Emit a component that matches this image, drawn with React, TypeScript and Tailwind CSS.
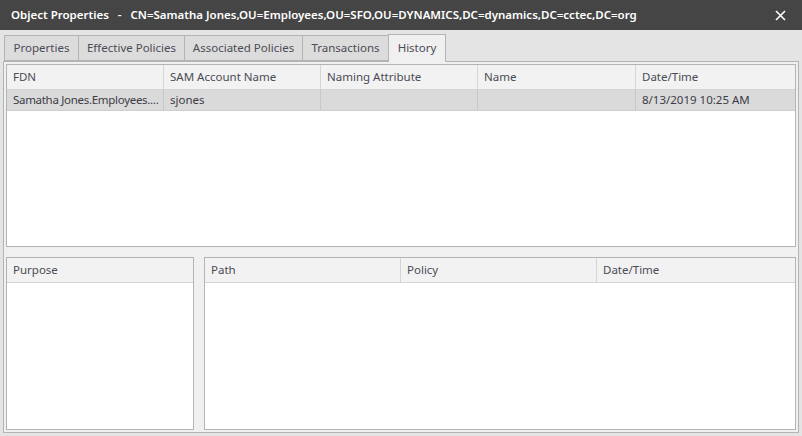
import React from "react"

const font = { fontFamily: '"Segoe UI", "Noto Sans", "Open Sans", sans-serif' }

const tabs = ["Properties", "Effective Policies", "Associated Policies", "Transactions", "History"]
const tabWidths = ["w-[75px]", "w-[107px]", "w-[119px]", "w-[87px]", "w-[58px]"]

function HeaderCell({ label, w, last }: { label: string; w: string; last?: boolean }) {
  return (
    <div className={`${w} h-full flex items-center px-[6px] text-[#4b4b55] ${last ? "" : "border-r border-[#d5d5d5]"}`}>
      {label}
    </div>
  )
}

export default function App() {
  return (
    <div className="w-[802px] h-[436px] flex flex-col bg-[#e4e4e4] text-[11.5px] overflow-hidden" style={font}>
      {/* title bar */}
      <div className="h-[30px] shrink-0 bg-[#454545] text-white flex items-center pl-[11px] pr-[14px] font-semibold">
        <span className="whitespace-pre flex-1">Object Properties   -   CN=Samatha Jones,OU=Employees,OU=SFO,OU=DYNAMICS,DC=dynamics,DC=cctec,DC=org</span>
        <svg width="11" height="11" viewBox="0 0 11 11" className="mr-[2px]">
          <path d="M1 1 L10 10 M10 1 L1 10" stroke="white" strokeWidth="1.6" />
        </svg>
      </div>

      {/* tabs */}
      <div className="flex items-end pl-[4px] h-[31px] shrink-0 relative z-10">
        {tabs.map((t, i) => {
          const active = t === "History"
          return (
            <div
              key={t}
              className={`${tabWidths[i]} flex items-center justify-center text-[#4b4b55] border border-[#b4b4b4] ${
                active
                  ? "h-[28px] bg-[#f0f0f0] border-b-0 -mb-px pb-[1px]"
                  : "h-[26px] bg-[#dcdcdc] -mr-px"
              }`}
            >
              {t}
            </div>
          )
        })}
      </div>

      {/* tab panel */}
      <div className="flex-1 mx-[3px] mb-[3px] border border-[#b4b4b4] bg-[#f0f0f0] p-[2px] flex flex-col gap-[10px]">
        {/* history grid */}
        <div className="h-[183px] shrink-0 border border-[#b4b4b4] bg-white flex flex-col">
          <div className="h-[25px] shrink-0 flex bg-[#f2f2f2] border-b border-[#d5d5d5]">
            <HeaderCell label="FDN" w="w-[157px]" />
            <HeaderCell label="SAM Account Name" w="w-[157px]" />
            <HeaderCell label="Naming Attribute" w="w-[157px]" />
            <HeaderCell label="Name" w="w-[158px]" />
            <HeaderCell label="Date/Time" w="flex-1" last />
          </div>
          <div className="h-[21px] shrink-0 flex bg-[#dadada] border-b border-[#cfcfcf] text-[#3c3c46]">
            <div className="w-[157px] flex items-center px-[6px] border-r border-[#c8c8c8] whitespace-nowrap tracking-[-0.3px]">Samatha Jones.Employees....</div>
            <div className="w-[157px] flex items-center px-[6px] border-r border-[#c8c8c8]">sjones</div>
            <div className="w-[157px] border-r border-[#c8c8c8]" />
            <div className="w-[158px] border-r border-[#c8c8c8]" />
            <div className="flex-1 flex items-center px-[6px]">8/13/2019 10:25 AM</div>
          </div>
        </div>

        {/* bottom grids */}
        <div className="flex-1 flex gap-[10px]">
          <div className="w-[188px] border border-[#b4b4b4] bg-white flex flex-col">
            <div className="h-[25px] shrink-0 flex bg-[#f2f2f2] border-b border-[#d5d5d5]">
              <HeaderCell label="Purpose" w="flex-1" last />
            </div>
          </div>
          <div className="flex-1 border border-[#b4b4b4] bg-white flex flex-col">
            <div className="h-[25px] shrink-0 flex bg-[#f2f2f2] border-b border-[#d5d5d5]">
              <HeaderCell label="Path" w="w-[196px]" />
              <HeaderCell label="Policy" w="w-[196px]" />
              <HeaderCell label="Date/Time" w="flex-1" last />
            </div>
          </div>
        </div>
      </div>
    </div>
  )
}
